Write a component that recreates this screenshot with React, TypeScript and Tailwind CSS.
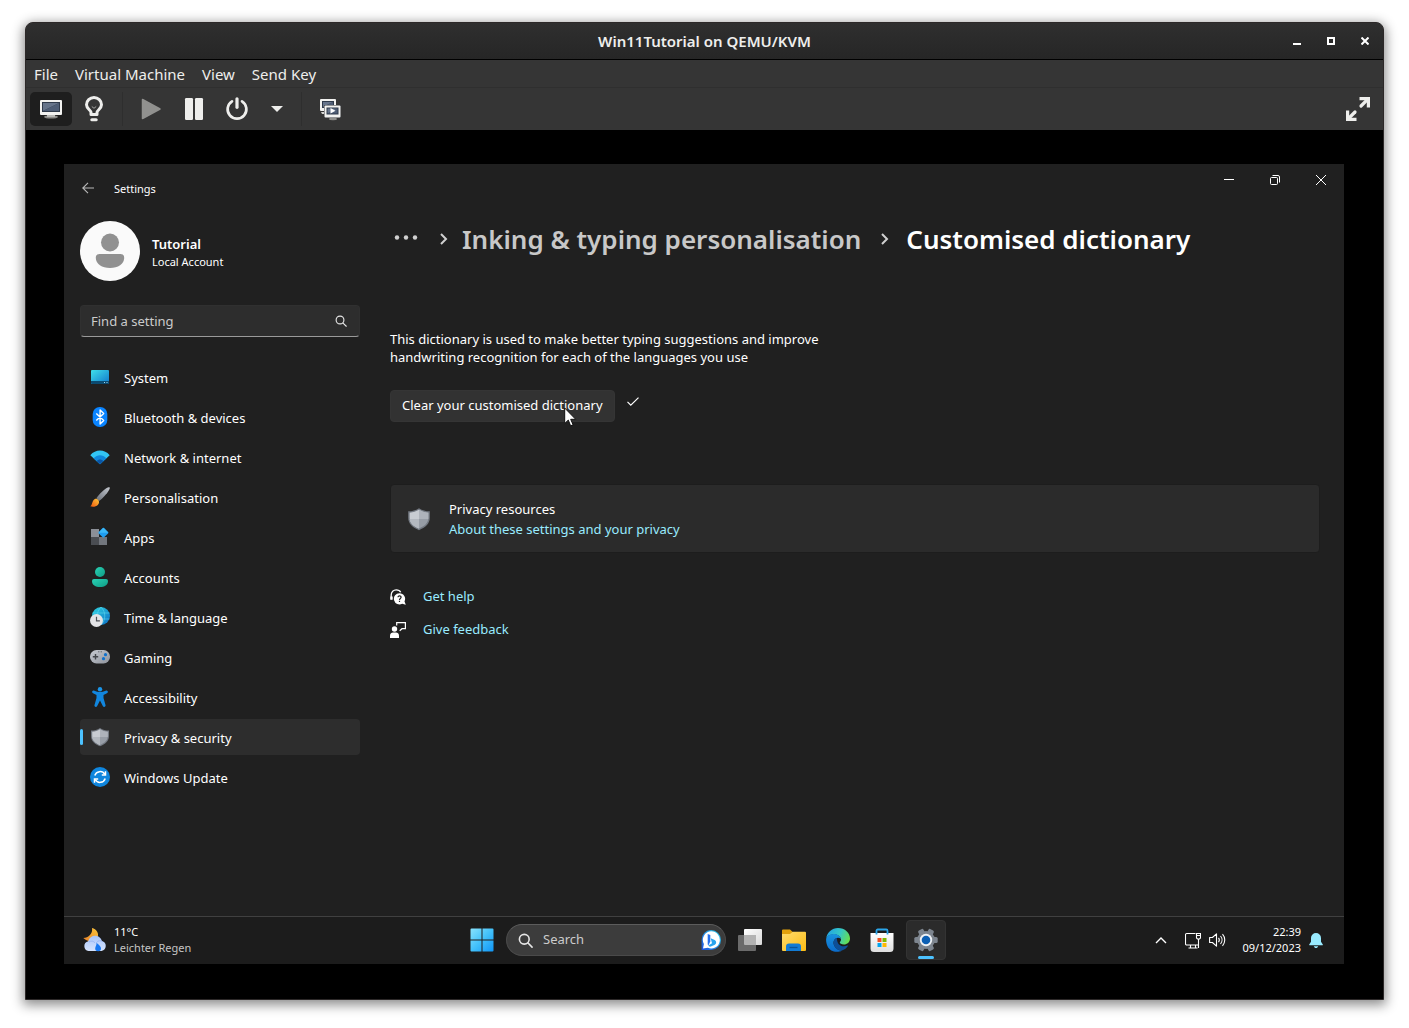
import type { ReactNode } from "react";

const HOST_FONT = "font-['Noto_Sans',sans-serif]";
const GUEST_FONT = "font-['Noto_Sans','Open_Sans',sans-serif]";

/* ---------- Host window icons ---------- */

function Monitor({ x, y, w, h }: { x: number; y: number; w: number; h: number }) {
  return (
    <g>
      <rect x={x} y={y} width={w} height={h} rx="1" fill="#f2f2f0" />
      <rect x={x + 2} y={y + 2} width={w - 4} height={h - 5} fill="#2f3a4a" />
      <path d={`M${x + 3} ${y + 3}H${x + w - 3}L${x + 3} ${y + h - 4}Z`} fill="#66748a" />
      <path d={`M${x + w - 3} ${y + 3}V${y + h - 4}H${x + 3}Z`} fill="#4e5d75" />
    </g>
  );
}

function ConsoleIcon() {
  return (
    <svg width="24" height="24" viewBox="0 0 24 24" aria-hidden="true">
      <ellipse cx="12" cy="20" rx="7" ry="1.600" fill="#8d8d8a" />
      <rect x="8" y="17" width="8" height="3" fill="#b9b9b6" />
      <Monitor x={1} y={3} w={22} h={15} />
    </svg>
  );
}

function BulbIcon() {
  return (
    <svg width="24" height="26" viewBox="0 0 24 26" fill="none" aria-hidden="true">
      <path d="M9 18.500v-2.100C9 14.200 4.500 12.800 4.500 8.800a7.500 7.300 0 0 1 15 0c0 4-4.500 5.400-4.500 7.600v2.100z" stroke="#eeeeec" strokeWidth="3" strokeLinejoin="round" />
      <path d="M9.800 10.500l2.200 1.800 2.200-1.800" stroke="#a5a5a3" strokeWidth="1" />
      <path d="M9.800 23.700h4.400" stroke="#eeeeec" strokeWidth="3" strokeLinecap="round" />
    </svg>
  );
}

function PlayIcon() {
  return (
    <svg width="24" height="24" viewBox="0 0 24 24" aria-hidden="true">
      <path d="M3.500 2.500v19L21 12z" fill="#91918f" stroke="#91918f" strokeWidth="1.500" strokeLinejoin="round" />
    </svg>
  );
}

function PauseIcon() {
  return (
    <svg width="24" height="24" viewBox="0 0 24 24" fill="#eeeeec" aria-hidden="true">
      <rect x="3" y="1" width="8" height="22" rx="1.200" />
      <rect x="13" y="1" width="8" height="22" rx="1.200" />
    </svg>
  );
}

function PowerIcon() {
  return (
    <svg width="24" height="24" viewBox="0 0 24 24" fill="none" stroke="#eeeeec" strokeWidth="2.700" strokeLinecap="round" aria-hidden="true">
      <path d="M12 1.800v8.500" strokeWidth="3.200" />
      <path d="M7 4.300a9.400 9.400 0 1 0 10 0" />
    </svg>
  );
}

function SnapshotsIcon() {
  return (
    <svg width="24" height="24" viewBox="0 0 24 24" aria-hidden="true">
      <ellipse cx="15" cy="22" rx="4" ry="1.200" fill="#8d8d8a" />
      <Monitor x={2} y={2} w={16} h={12} />
      <path d="M6 13h1v4H4l-1-2h3z" fill="#d5d5d2" />
      <rect x="6" y="8" width="17" height="13" rx="1" fill="#36393d" />
      <Monitor x={6.500} y={8.500} w={16} h={12} />
      <path d="M12.500 11v5.500l5-2.700z" fill="#fff" />
    </svg>
  );
}

function FullscreenIcon() {
  return (
    <svg width="24" height="24" viewBox="0 0 24 24" fill="none" stroke="#eeeeec" strokeWidth="3.200" aria-hidden="true">
      <path d="M13.500 1.600H22.400V10.500" />
      <path d="M21.500 2.500L15 9" strokeLinecap="round" />
      <path d="M1.600 13.500V22.400H10.500" />
      <path d="M2.500 21.500L9 15" strokeLinecap="round" />
    </svg>
  );
}

/* ---------- Settings icons ---------- */

function Icon({ children }: { children: ReactNode }) {
  return (
    <svg width="20" height="20" viewBox="0 0 20 20" fill="none" className="shrink-0" aria-hidden="true">
      {children}
    </svg>
  );
}

function SystemIcon() {
  return (
    <Icon>
      <defs>
        <linearGradient id="sys" x1="0" y1="0" x2="1" y2="1">
          <stop stopColor="#3fe0ea" />
          <stop offset="1" stopColor="#1077cc" />
        </linearGradient>
      </defs>
      <rect x="1" y="3" width="18" height="14" rx="1" fill="url(#sys)" />
      <path d="M1 14h18v2a1 1 0 0 1-1 1H2a1 1 0 0 1-1-1z" fill="#0b4a70" />
      <path d="M14 15.500h1M16.500 15.500h1" stroke="#9fd8f5" />
    </Icon>
  );
}

function BluetoothIcon() {
  return (
    <Icon>
      <rect x="2.700" width="14.600" height="20" rx="7" fill="#0a84ff" />
      <path d="M6.300 6.500l7.400 7-3.600 3.500V3l3.600 3.500-7.400 7" stroke="#fff" strokeWidth="1.400" strokeLinejoin="round" />
    </Icon>
  );
}

function NetworkIcon() {
  return (
    <Icon>
      <path d="M.3 8.200C5.500 2 14.500 2 19.700 8.200L10 17.300z" fill="#32c5f4" />
      <path d="M3.600 11.200c3.600-4 9.200-4 12.800 0L10 17.300z" fill="#0f88dc" />
      <path d="M6.500 14c2-2.100 5-2.100 7 0L10 17.300z" fill="#0b55a4" />
    </Icon>
  );
}

function BrushIcon() {
  return (
    <Icon>
      <defs>
        <linearGradient id="brh" x1="0" y1="1" x2="1" y2="0">
          <stop stopColor="#6b7079" />
          <stop offset="1" stopColor="#c4c8cf" />
        </linearGradient>
        <linearGradient id="brt" x1="1" y1="0" x2="0" y2="1">
          <stop stopColor="#ffc83b" />
          <stop offset="1" stopColor="#f0560d" />
        </linearGradient>
      </defs>
      <path d="M6.300 11.300C9.500 6.500 15 1.500 18.500.3c1-.3 1.500.3 1.200 1.200C18.500 5 13.500 10.800 9 14z" fill="url(#brh)" />
      <path d="M4.500 12.300c2-1.500 4.800.6 4.500 3.200-.4 3.700-5 4.900-8.800 3.800C2.600 18.200 1.800 14.200 4.500 12.300z" fill="url(#brt)" />
    </Icon>
  );
}

function AppsIcon() {
  return (
    <Icon>
      <rect x="1" y="2" width="8" height="8" fill="#8b8f97" />
      <rect x="1" y="10" width="8" height="8" fill="#4a4d52" />
      <rect x="9" y="10" width="8" height="8" fill="#72767d" />
      <rect x="9.600" y="1.900" width="7.600" height="7.600" rx="1" transform="rotate(45 13.400 5.700)" fill="#1f9df0" />
      <path d="M13.400.8L18.300 5.700 8.500 5.700z" fill="#3cb9f8" />
    </Icon>
  );
}

function AccountsIcon() {
  return (
    <Icon>
      <defs>
        <linearGradient id="acc" x1="0" y1="0" x2="1" y2="1">
          <stop stopColor="#2ad1b4" />
          <stop offset="1" stopColor="#0e9d86" />
        </linearGradient>
      </defs>
      <circle cx="10" cy="5" r="5" fill="url(#acc)" />
      <path d="M4 12h12a2 2 0 0 1 2 2c0 4-3.500 6-8 6s-8-2-8-6a2 2 0 0 1 2-2z" fill="url(#acc)" />
    </Icon>
  );
}

function TimeIcon() {
  return (
    <Icon>
      <defs>
        <linearGradient id="glb" x1="0" y1="0" x2="1" y2="1">
          <stop stopColor="#2fd6e2" />
          <stop offset="1" stopColor="#0c6cc4" />
        </linearGradient>
      </defs>
      <circle cx="11" cy="9" r="9" fill="url(#glb)" />
      <path d="M2.500 6h17M2.500 12h17M11 0c-5 5-5 13 0 18M11 0c5 5 5 13 0 18" stroke="#6ce6f5" strokeWidth=".6" opacity=".8" />
      <circle cx="6.500" cy="13.500" r="6.500" fill="#e3e4e6" />
      <path d="M6.500 9.800v4h3.400" stroke="#4c4f55" strokeWidth="1.200" />
    </Icon>
  );
}

function GamingIcon() {
  return (
    <Icon>
      <defs>
        <linearGradient id="gam" x1="0" y1="0" x2="1" y2="1">
          <stop stopColor="#c9ccd3" />
          <stop offset="1" stopColor="#8d929b" />
        </linearGradient>
      </defs>
      <rect y="3" width="20" height="13.500" rx="6.500" fill="url(#gam)" />
      <path d="M5.500 7v5.400M2.800 9.700h5.400" stroke="#44474c" strokeWidth="1.400" />
      <path d="M8.300 4.800h1M10.700 4.800h1" stroke="#44474c" />
      <circle cx="15.500" cy="7.700" r="1.600" fill="#1071cc" />
      <circle cx="13.500" cy="11.700" r="1.600" fill="#1071cc" />
    </Icon>
  );
}

function AccessibilityIcon() {
  return (
    <Icon>
      <circle cx="10" cy="2.200" r="2.200" fill="#1a96ea" />
      <path d="M2.300 4.300c.4-.9 1.300-1 2.100-.6 3.700 1.700 7.500 1.700 11.200 0 .8-.4 1.700-.3 2.100.6.400.8 0 1.600-.8 2L13.500 8v3l2 7c.5 1.900-1.900 2.600-2.700 1L10 13.500 7.200 19c-.8 1.600-3.200.9-2.700-1l2-7V8L3.100 6.300c-.8-.4-1.200-1.200-.8-2z" fill="#1286de" />
    </Icon>
  );
}

function ShieldIcon({ size = 20 }: { size?: number }) {
  return (
    <svg width={size} height={size} viewBox="0 0 20 20" className="shrink-0" aria-hidden="true">
      <path d="M10 1c2.800 1.800 5.500 2.500 9 2.600V9c0 5-3.800 8.200-9 10.300C4.800 17.200 1 14 1 9V3.600C4.500 3.500 7.200 2.800 10 1z" fill="#737982" />
      <path d="M10 2.300v15.700C5.400 16 2.200 13.200 2.200 9V4.700c3-.2 5.400-1 7.800-2.400z" fill="#c8ccd2" />
      <path d="M10 2.300c2.400 1.400 4.800 2.200 7.800 2.400V9c0 4.200-3.200 7-7.800 9z" fill="#979da6" />
      <path d="M10 2.300c2.400 1.400 4.800 2.200 7.800 2.400V10H10z" fill="#aeb3bb" />
      <path d="M2.200 10H10v8C5.600 16.100 2.400 13.500 2.200 10z" fill="#b3b8bf" />
    </svg>
  );
}

function UpdateIcon() {
  return (
    <Icon>
      <circle cx="10" cy="10" r="10" fill="#0f86de" />
      <path d="M4.800 8.500A5.500 5.500 0 0 1 14.800 7.300M15.200 11.500A5.500 5.500 0 0 1 5.200 12.700" stroke="#fff" strokeWidth="1.500" />
      <path d="M15.500 4.200v3.700h-3.700M4.500 15.800v-3.700h3.700" stroke="#fff" strokeWidth="1.500" />
    </Icon>
  );
}

function SearchGlyph({ size, width, flip }: { size: number; width: number; flip?: string }) {
  return (
    <svg width={size} height={size} viewBox="0 0 16 16" fill="none" stroke="#e6e6e6" strokeWidth={width} strokeLinecap="round" className={flip} aria-hidden="true">
      <circle cx="6.700" cy="6.700" r="5.200" />
      <path d="M10.700 10.700L15 15" />
    </svg>
  );
}

function Chevron() {
  return (
    <svg width="10" height="14" viewBox="0 0 10 14" fill="none" stroke="#d0d0d0" strokeWidth="2" className="shrink-0" aria-hidden="true">
      <path d="M2 2l5 5-5 5" />
    </svg>
  );
}

function HelpIcon() {
  return (
    <svg width="16" height="16" viewBox="0 0 16 16" fill="none" className="shrink-0" aria-hidden="true">
      <path d="M1.200 10.500V6C1.200 2.800 3.500.8 6.200.8c2.200 0 3.800 1 4.500 2.500" stroke="#fff" strokeWidth="1.300" />
      <path d="M.3 7.500h2.400v3.200H.3z" fill="#fff" />
      <path d="M9.500 4.200a5.600 5.600 0 0 1 5 8.200l1.300 3.400-3.600-1.100A5.600 5.600 0 1 1 9.500 4.200z" fill="#fff" />
      <path d="M8 8.300c0-2 3.200-1.900 3.100 0-.1 1.200-1.600 1.200-1.600 2.600M9.500 11.800V13" stroke="#202020" strokeWidth="1.200" />
    </svg>
  );
}

function FeedbackIcon() {
  return (
    <svg width="16" height="16" viewBox="0 0 16 16" fill="none" className="shrink-0" aria-hidden="true">
      <path d="M6.700 3.500V.7h8.700v6H12L9.700 8.800" stroke="#fff" strokeWidth="1.200" />
      <circle cx="4.500" cy="7" r="2.700" fill="#fff" />
      <path d="M0 16v-2.500C0 11.500 1.500 10.500 3 10.500h3c1.500 0 3 1 3 3V16z" fill="#fff" />
    </svg>
  );
}

function CursorArrow() {
  return (
    <svg width="13" height="20" viewBox="0 0 13 20" className="pointer-events-none absolute top-4 left-[173px]" aria-hidden="true">
      <path d="M.7 1v15.500l3.600-3.400L6.600 18.800l2.500-1-2.400-5.500h5z" fill="#fff" stroke="#111" strokeWidth="1" />
    </svg>
  );
}

/* ---------- Taskbar icons ---------- */

function WeatherIcon() {
  return (
    <svg width="26" height="26" viewBox="0 0 26 26" aria-hidden="true">
      <defs>
        <linearGradient id="cld" x1="0" y1="0" x2="0" y2="1">
          <stop stopColor="#a9c5fb" />
          <stop offset="1" stopColor="#d5e3fd" />
        </linearGradient>
        <linearGradient id="moon" x1="1" y1="0" x2="0" y2="1">
          <stop stopColor="#fcc63c" />
          <stop offset="1" stopColor="#e9822a" />
        </linearGradient>
      </defs>
      <path d="M10 1c4.500 1 7 5 5.800 9C14.500 14.500 7 16.500 1.300 11 6.500 11 11 6.500 10 1z" fill="url(#moon)" />
      <path d="M6.500 24a5 5 0 0 1-.3-9.800C7.200 10.700 10 8.800 13 8.800c3.500 0 6 2.200 6.800 5.200A5.100 5.100 0 0 1 19.500 24z" fill="url(#cld)" />
      <path d="M7 15c2-1.500 4.500-1 6 .8M14.500 15.500c1.500-2 4-2.300 6-1" stroke="#9db9f4" strokeWidth="1" fill="none" />
      <path d="M14.500 15.500c1.500 2 4.500 3.500 4.500 6A2.800 2.800 0 0 1 16.200 24.300c-2 0-3.200-1.300-3-3 .3-2 1.700-3.500 1.300-5.800z" fill="#1878f2" />
    </svg>
  );
}

function StartIcon() {
  return (
    <svg width="24" height="24" viewBox="0 0 24 24" aria-hidden="true">
      <defs>
        <linearGradient id="win" x1="0" y1="0" x2="24" y2="24" gradientUnits="userSpaceOnUse">
          <stop stopColor="#8ce4fd" />
          <stop offset=".5" stopColor="#43c1fa" />
          <stop offset="1" stopColor="#0e93f5" />
        </linearGradient>
      </defs>
      <path d="M.5 1.500a1 1 0 0 1 1-1h10v11H.5zM12.500.5h10a1 1 0 0 1 1 1v10h-11zM.5 12.500h11v11h-10a1 1 0 0 1-1-1zM12.500 12.500h11v10a1 1 0 0 1-1 1h-10z" fill="url(#win)" />
    </svg>
  );
}

function BingIcon() {
  return (
    <svg width="20" height="20" viewBox="0 0 20 20" aria-hidden="true">
      <defs>
        <linearGradient id="bing" x1="1" y1="0" x2="0" y2="1">
          <stop stopColor="#2fd0ea" />
          <stop offset="1" stopColor="#1a4fdc" />
        </linearGradient>
      </defs>
      <path d="M10 0a10 10 0 1 1 0 20H.6V10A9.700 9.700 0 0 1 10 0z" fill="url(#bing)" />
      <path d="M10.200 1.300a8.600 8.600 0 1 1-3.400 16.500L2 18.600l.9-4.500a8.600 8.600 0 0 1 7.300-12.800z" fill="#fff" />
      <path d="M6.700 4l2.600 1v6.600L7.500 15.200l-.8-.8z" fill="#2470ee" />
      <path d="M9.700 8.200l4 1.700c2 1 1.900 3.800.2 4.800L9.800 16.500c-1 .4-2-.1-2.500-1l3.700-2.300z" fill="#28a4ee" />
    </svg>
  );
}

function TaskViewIcon() {
  return (
    <svg width="24" height="24" viewBox="0 0 24 24" aria-hidden="true">
      <defs>
        <linearGradient id="tv" x1="0" y1="0" x2="1" y2="1">
          <stop stopColor="#fff" />
          <stop offset="1" stopColor="#d9d9d9" />
        </linearGradient>
      </defs>
      <rect x="6" y="1" width="18" height="16" rx="1" fill="url(#tv)" />
      <rect x="0" y="7" width="18" height="16" rx="1" fill="#6b6b6b" />
      <path d="M6 7h12v10H7a1 1 0 0 1-1-1z" fill="#b3b3b3" />
    </svg>
  );
}

function ExplorerIcon() {
  return (
    <svg width="24" height="24" viewBox="0 0 24 24" aria-hidden="true">
      <defs>
        <linearGradient id="fol" x1="0" y1="0" x2="1" y2="1">
          <stop stopColor="#ffdc6e" />
          <stop offset="1" stopColor="#fbbc14" />
        </linearGradient>
      </defs>
      <path d="M0 2.500a1 1 0 0 1 1-1h7l2.500 2.300L8 7H0z" fill="#e2a10c" />
      <path d="M0 6h8l2.500-2.300H23a1 1 0 0 1 1 1V22a1 1 0 0 1-1 1H1a1 1 0 0 1-1-1z" fill="url(#fol)" />
      <path d="M4 23v-4.500a3 3 0 0 1 3-3h9a3 3 0 0 1 3 3V23z" fill="#127bd4" />
      <path d="M7.500 19.500h8" stroke="#0b5598" strokeWidth="1.300" />
    </svg>
  );
}

function EdgeIcon() {
  return (
    <svg width="24" height="24" viewBox="0 0 24 24" aria-hidden="true">
      <defs>
        <linearGradient id="eg1" x1="0" y1=".3" x2="1" y2=".6">
          <stop stopColor="#22a4e4" />
          <stop offset=".55" stopColor="#36c8c4" />
          <stop offset="1" stopColor="#67df4e" />
        </linearGradient>
        <linearGradient id="eg2" x1="0" y1="0" x2="0" y2="1">
          <stop stopColor="#1993de" />
          <stop offset="1" stopColor="#0b6bcb" />
        </linearGradient>
      </defs>
      <path d="M.2 10.500C1 4.500 6 0 12 0c7 0 12 5 12 10.500 0 3.800-3 6-6 6-2.500 0-4.200-.8-4.200-1.900 0-.9 1.200-1.200 1.200-3.100 0-2.500-3-5.200-7-5.200-4.200 0-7 2.200-7.800 4.200z" fill="url(#eg1)" />
      <path d="M.2 10.500c1-3 4-4.500 7.300-4.500 4 0 7 2 7.400 5-1-1-2.400-1.400-3.700-1.100C8 10.500 6.800 14 8 17c1.300 3.300 4.500 5.800 8 5.400-5 3-12 1.300-14.600-4.500C.4 15.700-.1 13 .2 10.500z" fill="url(#eg2)" />
      <path d="M11 10c-3 .7-4.200 4-3 7.200 1.200 3.200 4.600 6 8.500 5.100 2.300-.7 4-2.300 5.200-4 .5-.8 0-1-.6-.8-5 2.300-10.500-.5-10.100-7.500z" fill="#0d4f98" />
    </svg>
  );
}

function StoreIcon() {
  return (
    <svg width="24" height="24" viewBox="0 0 24 24" aria-hidden="true">
      <defs>
        <linearGradient id="bag" x1="0" y1="0" x2="0" y2="1">
          <stop stopColor="#fff" />
          <stop offset="1" stopColor="#dedede" />
        </linearGradient>
      </defs>
      <path d="M.5 5h23v15.500A3.500 3.500 0 0 1 20 24H4a3.500 3.500 0 0 1-3.500-3.500z" fill="url(#bag)" />
      <path d="M6.500 6.500V2.800A1.300 1.300 0 0 1 7.800 1.500h8.400a1.300 1.300 0 0 1 1.300 1.300v3.700" fill="none" stroke="#2ba6ea" strokeWidth="1.800" />
      <path d="M7.500 10h4v4h-4z" fill="#f25022" />
      <path d="M12.500 10h4v4h-4z" fill="#7fba00" />
      <path d="M7.500 15h4v4h-4z" fill="#00a4ef" />
      <path d="M12.500 15h4v4h-4z" fill="#ffb900" />
    </svg>
  );
}

function GearIcon() {
  return (
    <svg width="24" height="24" viewBox="0 0 24 24" aria-hidden="true">
      <g fill="#7d858f">
        <circle cx="12" cy="12" r="9" />
        {[30, 90, 150].map((angle) => (
          <rect key={angle} x="9" y=".3" width="6" height="23.400" rx="1.600" transform={`rotate(${angle} 12 12)`} />
        ))}
      </g>
      <circle cx="12" cy="12" r="6.200" fill="#eef1f4" />
      <circle cx="12" cy="12" r="4.300" fill="#0c5fb4" />
    </svg>
  );
}

function NetworkTrayIcon() {
  return (
    <svg width="16" height="17" viewBox="0 0 16 17" fill="none" stroke="#fff" strokeWidth="1.100" aria-hidden="true">
      <path d="M10.500 1.500H1.700a1.200 1.200 0 0 0-1.200 1.200v9.100A1.200 1.200 0 0 0 1.700 13h11.800M5.500 13v3M10.500 13v3M3.500 16h9" />
      <path d="M11.500 1.500h4V6l-1 1h-2l-1-1zM11.500 3.500h4M13.500 7v9" />
    </svg>
  );
}

function SpeakerIcon() {
  return (
    <svg width="17" height="16" viewBox="0 0 17 16" fill="none" stroke="#fff" strokeWidth="1.100" strokeLinejoin="round" aria-hidden="true">
      <path d="M.6 5.500h2.800L7.500 1.800v12.400L3.400 10.500H.6z" />
      <path d="M9.500 5.800c1 1.300 1 3.100 0 4.400M11.500 4c2 2.300 2 5.700 0 8M13.500 2.200c3 3.300 3 8.300 0 11.600" />
    </svg>
  );
}

/* ---------- Data ---------- */

const NAV: { label: string; icon: ReactNode; active?: boolean }[] = [
  { label: "System", icon: <SystemIcon /> },
  { label: "Bluetooth & devices", icon: <BluetoothIcon /> },
  { label: "Network & internet", icon: <NetworkIcon /> },
  { label: "Personalisation", icon: <BrushIcon /> },
  { label: "Apps", icon: <AppsIcon /> },
  { label: "Accounts", icon: <AccountsIcon /> },
  { label: "Time & language", icon: <TimeIcon /> },
  { label: "Gaming", icon: <GamingIcon /> },
  { label: "Accessibility", icon: <AccessibilityIcon /> },
  { label: "Privacy & security", icon: <ShieldIcon />, active: true },
  { label: "Windows Update", icon: <UpdateIcon /> },
];

/* ---------- Host window chrome ---------- */

function TitleBar() {
  return (
    <header className="relative flex h-[37px] items-center justify-center border-b border-black bg-linear-to-b from-[#2f2f2f] to-[#262626]">
      <h1 className="text-[15px] font-semibold text-[#eeeeec]">Win11Tutorial on QEMU/KVM</h1>
      <div className="absolute inset-y-0 right-px flex items-center">
        <button aria-label="Minimise window" className="flex h-8 w-[34px] items-center justify-center">
          <svg width="8" height="8" viewBox="0 0 8 8"><path d="M0 7h8" stroke="#fff" strokeWidth="2" /></svg>
        </button>
        <button aria-label="Maximise window" className="flex h-8 w-[34px] items-center justify-center">
          <svg width="8" height="8" viewBox="0 0 8 8"><path d="M1 1h6v6H1z" stroke="#fff" strokeWidth="2" fill="none" /></svg>
        </button>
        <button aria-label="Close window" className="flex h-8 w-[34px] items-center justify-center">
          <svg width="8" height="8" viewBox="0 0 8 8"><path d="M.5.500l7 7M7.500.500l-7 7" stroke="#fff" strokeWidth="2" /></svg>
        </button>
      </div>
    </header>
  );
}

function MenuBar() {
  return (
    <nav aria-label="Application menu" className="flex h-7 items-center gap-[17px] border-b border-[#2f2f2f] px-2 pt-[2px] text-[15px] text-[#eeeeec]">
      <button>File</button>
      <button>Virtual Machine</button>
      <button>View</button>
      <button>Send Key</button>
    </nav>
  );
}

function ToolButton({ label, pressed, children }: { label: string; pressed?: boolean; children: ReactNode }) {
  return (
    <button
      aria-label={label}
      aria-pressed={pressed}
      className={`flex h-[34px] w-[42px] items-center justify-center rounded-[5px] ${pressed ? "bg-[#1e1e1e]" : ""}`}
    >
      {children}
    </button>
  );
}

function ToolSeparator() {
  return (
    <span className="flex w-[13px] justify-center">
      <span className="h-[34px] w-px bg-[#2e2e2e]" />
    </span>
  );
}

function ToolBar() {
  return (
    <div role="toolbar" className="flex h-[42px] items-center gap-px px-1">
      <ToolButton label="Console" pressed><ConsoleIcon /></ToolButton>
      <ToolButton label="Details"><BulbIcon /></ToolButton>
      <ToolSeparator />
      <ToolButton label="Run"><PlayIcon /></ToolButton>
      <ToolButton label="Pause"><PauseIcon /></ToolButton>
      <ToolButton label="Shut down"><PowerIcon /></ToolButton>
      <button aria-label="Shut down options" className="flex h-[34px] w-[35px] items-center justify-center">
        <svg width="12" height="6" viewBox="0 0 12 6"><path d="M0 0h12L6 6z" fill="#eeeeec" /></svg>
      </button>
      <ToolSeparator />
      <ToolButton label="Snapshots"><SnapshotsIcon /></ToolButton>
      <div className="ml-auto">
        <ToolButton label="Fullscreen"><FullscreenIcon /></ToolButton>
      </div>
    </div>
  );
}

/* ---------- Settings app ---------- */

function SettingsHeader() {
  return (
    <div className="flex h-12 items-start justify-between">
      <div className="flex h-12 items-center">
        <button aria-label="Back" className="flex h-8 w-[50px] items-center pl-[18px]">
          <svg width="12" height="12" viewBox="0 0 12 12" fill="none" stroke="#b8b8b8" strokeWidth="1.100"><path d="M12 6H.8M6 .8L.8 6 6 11.200" /></svg>
        </button>
        <span className="pt-[2px] text-[11px]">Settings</span>
      </div>
      <div className="flex">
        <button aria-label="Minimise" className="flex h-8 w-[46px] items-center justify-center">
          <svg width="10" height="10" viewBox="0 0 10 10"><path d="M0 4.500h10" stroke="#fff" /></svg>
        </button>
        <button aria-label="Restore" className="flex h-8 w-[46px] items-center justify-center">
          <svg width="10" height="10" viewBox="0 0 10 10" fill="none" stroke="#fff"><rect x=".5" y="2.500" width="7" height="7" rx="1" /><path d="M2.500.5H8A1.500 1.500 0 0 1 9.500 2v5.500" /></svg>
        </button>
        <button aria-label="Close" className="flex h-8 w-[46px] items-center justify-center">
          <svg width="10" height="10" viewBox="0 0 10 10"><path d="M0 0l10 10M10 0L0 10" stroke="#fff" /></svg>
        </button>
      </div>
    </div>
  );
}

function Sidebar() {
  return (
    <aside className="w-[280px] shrink-0 pt-[9px]">
      <button className="flex items-center gap-3 text-left">
        <svg width="60" height="60" viewBox="0 0 60 60" aria-hidden="true">
          <circle cx="30" cy="30" r="30" fill="#fafafa" />
          <circle cx="30" cy="21.500" r="9" fill="#919191" />
          <path d="M19.500 33h21a3.700 3.700 0 0 1 3.700 3.700C44.200 43 38 47 30 47s-14.200-4-14.200-10.300a3.700 3.700 0 0 1 3.700-3.700z" fill="#919191" />
        </svg>
        <span className="flex flex-col pt-1">
          <span className="text-[13px] leading-[18px] font-semibold">Tutorial</span>
          <span className="text-[11px] leading-[18px]">Local Account</span>
        </span>
      </button>
      <label className="mt-6 flex h-8 items-center rounded-[4px] border border-[#303030] border-b-[#9a9a9a] bg-[#2d2d2d] pr-3 pl-[10px]">
        <input
          type="text"
          aria-label="Find a setting"
          placeholder="Find a setting"
          className="min-w-0 flex-1 bg-transparent pt-[2px] text-[13px] outline-none placeholder:text-[#cbcbcb]"
        />
        <SearchGlyph size={12} width={1.500} />
      </label>
      <nav aria-label="Settings categories" className="mt-[22px] flex flex-col gap-1">
        {NAV.map(({ label, icon, active }) => (
          <a
            key={label}
            href="#"
            aria-current={active ? "page" : undefined}
            className={`relative flex h-9 items-center gap-[14px] rounded-[4px] pl-[10px] text-[13px] ${active ? "bg-[#2d2d2d]" : ""}`}
          >
            {active && <span className="absolute top-[10px] left-0 h-4 w-[3px] rounded-full bg-[#4cc2ff]" />}
            {icon}
            <span className="pt-[3px]">{label}</span>
          </a>
        ))}
      </nav>
    </aside>
  );
}

function Content() {
  return (
    <main className="min-w-0 flex-1 pt-[9px]">
      <nav aria-label="Breadcrumb">
        <ol className="flex h-9 items-center text-[26px] leading-9 font-semibold">
          <li className="flex w-[72px] items-center justify-between pr-[13px] pl-1">
            <button aria-label="Show more levels">
              <svg width="24" height="8" viewBox="0 0 24 8" fill="#d0d0d0"><circle cx="3" cy="2.500" r="2.200" /><circle cx="12" cy="2.500" r="2.200" /><circle cx="21" cy="2.500" r="2.200" /></svg>
            </button>
            <Chevron />
          </li>
          <li className="flex items-center gap-[19px]">
            <a href="#" className="whitespace-nowrap text-[#c8c8c8]">Inking &amp; typing personalisation</a>
            <Chevron />
          </li>
          <li aria-current="page" className="pl-4 whitespace-nowrap">Customised dictionary</li>
        </ol>
      </nav>
      <p className="mt-[73px] max-w-[450px] text-[13px] leading-[18px]">
        This dictionary is used to make better typing suggestions and improve handwriting recognition for each of the languages you use
      </p>
      <div className="mt-6 flex items-start gap-3">
        <button className="relative h-8 rounded-[4px] border border-[#353535] bg-[#323232] px-[11px] text-[13px]">
          Clear your customised dictionary
          <CursorArrow />
        </button>
        <svg width="12" height="9" viewBox="0 0 12 9" fill="none" stroke="#fff" strokeWidth="1.200" className="mt-[7px]" aria-label="Done"><path d="M.5 4.800l3.300 3.300L11.500.6" /></svg>
      </div>
      <section className="mt-[62px] flex items-center gap-[18px] rounded-[4px] border border-[#1d1d1d] bg-[#2b2b2b] pt-[14px] pb-[13px] pl-4 leading-5">
        <ShieldIcon size={24} />
        <div className="text-[13px]">
          <h2>Privacy resources</h2>
          <a href="#" className="text-[#99ebff]">About these settings and your privacy</a>
        </div>
      </section>
      <div className="mt-[27px] flex flex-col items-start text-[13px] leading-[33px] text-[#99ebff]">
        <a href="#" className="flex items-center gap-[17px]"><HelpIcon />Get help</a>
        <a href="#" className="flex items-center gap-[17px]"><FeedbackIcon />Give feedback</a>
      </div>
    </main>
  );
}

/* ---------- Taskbar ---------- */

function TaskButton({ label, active, children }: { label: string; active?: boolean; children: ReactNode }) {
  return (
    <button
      aria-label={label}
      className={`relative flex size-10 items-center justify-center rounded-[4px] border ${active ? "border-[#333333] bg-[#2b2b2b]" : "border-transparent"}`}
    >
      {children}
      {active && <span className="absolute bottom-0 h-[3px] w-4 rounded-full bg-[#4cc2ff]" />}
    </button>
  );
}

function Taskbar() {
  return (
    <footer className="grid h-12 grid-cols-[1fr_auto_1fr] items-center border-t border-[#404040] bg-[#1c1c1c] pb-px">
      <button className="flex items-center gap-[6px] pl-[18px] text-left text-[11px] leading-4">
        <WeatherIcon />
        <span className="flex flex-col">
          <span>11°C</span>
          <span className="text-[#c5c5c5]">Leichter Regen</span>
        </span>
      </button>
      <div className="flex items-center gap-1">
        <TaskButton label="Start"><StartIcon /></TaskButton>
        <label className="flex h-8 w-[220px] items-center gap-[10px] rounded-full border border-[#4a4a4a] border-t-[#5c5c5c] bg-[#3c3c3c] pr-1 pl-[11px]">
          <SearchGlyph size={15} width={1.700} />
          <input
            type="text"
            aria-label="Search"
            placeholder="Search"
            className="min-w-0 flex-1 bg-transparent text-[13px] outline-none placeholder:text-[#cbcbcb]"
          />
          <BingIcon />
        </label>
        <TaskButton label="Task view"><TaskViewIcon /></TaskButton>
        <TaskButton label="File Explorer"><ExplorerIcon /></TaskButton>
        <TaskButton label="Microsoft Edge"><EdgeIcon /></TaskButton>
        <TaskButton label="Microsoft Store"><StoreIcon /></TaskButton>
        <TaskButton label="Settings" active><GearIcon /></TaskButton>
      </div>
      <div className="flex items-center justify-end pr-[21px]">
        <button aria-label="Show hidden icons" className="mr-[18px]">
          <svg width="12" height="8" viewBox="0 0 12 8" fill="none" stroke="#fff" strokeWidth="1.400"><path d="M1 7l5-5 5 5" /></svg>
        </button>
        <button aria-label="Network and volume" className="mr-4 flex items-center gap-2">
          <NetworkTrayIcon />
          <SpeakerIcon />
        </button>
        <button className="flex flex-col items-end text-[11px] leading-4">
          <span>22:39</span>
          <span>09/12/2023</span>
        </button>
        <button aria-label="Notifications" className="ml-2">
          <svg width="14" height="15" viewBox="0 0 14 15" fill="#99ebff"><path d="M7 0a5 5 0 0 1 5 5v3.700l1.800 2.800c.2.400 0 .8-.4.800H.6c-.4 0-.6-.4-.4-.8L2 8.700V5a5 5 0 0 1 5-5zM4.800 13.200h4.400C8.800 14.400 8 15 7 15s-1.800-.6-2.200-1.800z" /></svg>
        </button>
      </div>
    </footer>
  );
}

export default function App() {
  return (
    <div className={`flex min-h-screen flex-col bg-white px-[25px] pt-[22px] pb-7 ${HOST_FONT}`}>
      <div className="flex flex-1 flex-col overflow-hidden rounded-t-[8px] border border-[#2c2828] bg-[#353535] shadow-[0_3px_12px_2px_rgba(0,0,0,0.45)]">
        <TitleBar />
        <MenuBar />
        <ToolBar />
        <div className={`flex flex-1 flex-col bg-black pt-[34px] pr-[39px] pb-[35px] pl-[38px] text-white ${GUEST_FONT}`}>
          <div className="flex flex-1 flex-col bg-[#202020]">
            <SettingsHeader />
            <div className="flex flex-1 gap-[30px] pr-6 pl-4">
              <Sidebar />
              <Content />
            </div>
          </div>
          <Taskbar />
        </div>
      </div>
    </div>
  );
}
